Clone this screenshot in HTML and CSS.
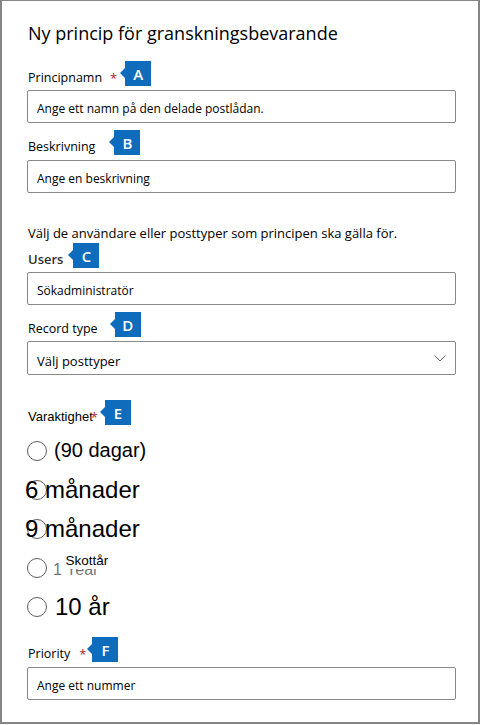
FILE: index.html
```html
<!DOCTYPE html>
<html lang="sv">
<head>
    <meta charset="UTF-8">
    <meta name="viewport" content="width=device-width, initial-scale=1.0">
    <title>Ny princip för granskningsbevarande</title>
    <link rel="stylesheet" href="styles.css">
</head>
<body>
    <div class="panel">
        <h1 class="title">Ny princip för granskningsbevarande</h1>

        <div class="label-row row-a">
            <span class="label">Principnamn</span>
            <span class="req">*</span>
            <span class="badge">A</span>
        </div>
        <div class="field">Ange ett namn på den delade postlådan.</div>

        <div class="label-row row-b">
            <span class="label">Beskrivning</span>
            <span class="badge">B</span>
        </div>
        <div class="field field-b">Ange en beskrivning</div>

        <p class="desc">Välj de användare eller posttyper som principen ska gälla för.</p>

        <div class="label-row row-c">
            <span class="label label-strong">Users</span>
            <span class="badge">C</span>
        </div>
        <div class="field">Sökadministratör</div>

        <div class="label-row row-d">
            <span class="label">Record type</span>
            <span class="badge">D</span>
        </div>
        <div class="field select">
            <span class="select-text">Välj posttyper</span>
            <svg class="chevron" width="12" height="7" viewBox="0 0 12 7">
                <polyline points="0.5,0.5 6,6 11.5,0.5" fill="none" stroke="#605e5c" stroke-width="1"/>
            </svg>
        </div>

        <div class="label-row row-e">
            <span class="label label-plain">Varaktighet</span>
            <span class="req">*</span>
            <span class="badge">E</span>
        </div>

        <div class="radios">
            <div class="radio">
                <span class="circle"></span>
                <span class="opt opt-md">(90 dagar)</span>
            </div>
            <div class="radio">
                <span class="circle"></span>
                <span class="opt opt-lg">6 månader</span>
            </div>
            <div class="radio">
                <span class="circle"></span>
                <span class="opt opt-lg">9 månader</span>
            </div>
            <div class="radio">
                <span class="circle"></span>
                <span class="opt opt-year">1 Year</span>
                <span class="opt-leap">Skottår</span>
            </div>
            <div class="radio">
                <span class="circle"></span>
                <span class="opt opt-ten">10 år</span>
            </div>
        </div>

        <div class="label-row row-f">
            <span class="label">Priority</span>
            <span class="req">*</span>
            <span class="badge">F</span>
        </div>
        <div class="field field-f">Ange ett nummer</div>
    </div>
</body>
</html>
```

FILE: styles.css
```css
* { box-sizing: border-box; }
body { margin: 0; background: #fff; font-family: "Open Sans", sans-serif; color: #201f1e; }

.panel {
    width: 480px;
    height: 724px;
    border: 2px solid #858585;
    border-top-width: 1px;
    padding: 21px 0 0 25px;
}
.title { margin: 0; font-size: 18px; font-weight: 400; line-height: 22px; padding-left: 1px; color: #000; }

/* label + required mark + callout badge */
.label-row { display: flex; align-items: flex-end; height: 25px; margin-top: 7px; }
.label { font-size: 12.5px; line-height: 17px; padding-left: 1px; color: #000; }
.label-strong { font-size: 13px; font-weight: 600; color: #323130; }
.label-plain { font-family: "Liberation Sans", Arial, sans-serif; font-size: 13px; }
.req { color: #a4262c; font-size: 13px; line-height: 20px; align-self: flex-start; margin-top: 7px; }
.badge {
    position: relative;
    width: 26px;
    height: 25px;
    background: #0f6cbd;
    color: #fff;
    font-size: 15px;
    font-weight: 600;
    display: flex;
    align-items: center;
    justify-content: center;
}
.badge::before {
    content: "";
    position: absolute;
    left: -5px;
    top: 7px;
    border-style: solid;
    border-width: 5px 5px 5px 0;
    border-color: transparent #0f6cbd transparent transparent;
}

.row-a { margin-top: 17px; }
.row-a .req { margin-left: 8px; }
.row-a .badge { margin-left: 8px; }
.row-b .badge { margin-left: 19px; }
.row-c { margin-top: 1px; }
.row-c .badge { margin-left: 10px; }
.row-d .badge { margin-left: 17px; }
.row-e { margin-top: 25px; }
.row-e .req { margin-left: -2px; }
.row-e .badge { margin-left: 7px; }
.row-f { margin-top: 11px; }
.row-f .req { margin-left: 9px; }
.row-f .badge { margin-left: 6px; }

/* text boxes */
.field {
    margin-top: 4px;
    width: 429px;
    height: 33px;
    border: 1px solid #8a8886;
    border-radius: 2px;
    padding: 9px 0 0 9px;
    font-size: 12px;
    line-height: 17px;
    color: #000;
}
.field-b, .field-f { margin-top: 5px; }
.select {
    height: 34px;
    padding: 0 9px;
    display: flex;
    align-items: center;
    justify-content: space-between;
}
.select-text { font-size: 13px; margin-top: 6px; }

.desc { margin: 31px 0 0; font-size: 13px; line-height: 18px; padding-left: 1px; color: #000; }

/* duration options */
.radios { margin-top: 6px; }
.radio { display: flex; align-items: center; height: 39px; }
.circle { flex: none; width: 20px; height: 20px; border: 1px solid #605e5c; border-radius: 50%; }
.opt { font-family: "Liberation Sans", Arial, sans-serif; color: #000; white-space: nowrap; }
.opt-md { font-size: 20px; line-height: 23px; margin-left: 7px; }
.opt-lg { font-size: 24px; line-height: 27px; margin-left: -22px; }
.opt-ten { font-size: 24px; line-height: 27px; margin-left: 8px; }
.opt-year { font-size: 16px; line-height: 18px; color: #767676; margin: 4px 0 0 6px; }
.opt-leap {
    position: relative;
    top: -7px;
    margin-left: -33px;
    background: #fff;
    font-family: "Liberation Sans", Arial, sans-serif;
    font-size: 13.5px;
    line-height: 17px;
    color: #000;
}
```
